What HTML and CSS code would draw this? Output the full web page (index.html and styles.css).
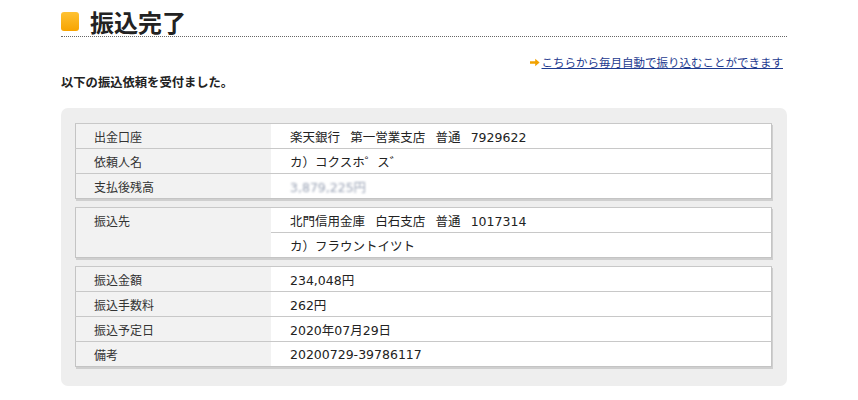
FILE: index.html
```html
<!DOCTYPE html>
<html lang="ja">
<head>
  <meta charset="UTF-8">
  <title>振込完了</title>
  <link rel="stylesheet" href="styles.css">
</head>
<body>
  <div class="page">
    <h1 class="title"><span class="title-mark"></span>振込完了</h1>
    <div class="link-row">
      <svg class="arrow" width="10" height="9" viewBox="0 0 10 9"><path d="M0 3.3h5.2V0.8L9.6 4.5 5.2 8.2V5.7H0z" fill="#f2a200"/></svg><a href="#" class="link">こちらから毎月自動で振り込むことができます</a>
    </div>
    <p class="intro">以下の振込依頼を受付ました。</p>

    <div class="panel">
      <table class="info">
        <tr><th>出金口座</th><td>楽天銀行&ensp;&nbsp;第一営業支店&ensp;&nbsp;普通&ensp;&nbsp;7929622</td></tr>
        <tr><th>依頼人名</th><td>カ）コクスホ゜ス゛</td></tr>
        <tr><th>支払後残高</th><td><span class="masked">3,879,225円</span></td></tr>
      </table>
      <table class="info">
        <tr><th rowspan="2" class="top">振込先</th><td>北門信用金庫&ensp;&nbsp;白石支店&ensp;&nbsp;普通&ensp;&nbsp;1017314</td></tr>
        <tr><td>カ）フラウントイツト</td></tr>
      </table>
      <table class="info">
        <tr><th>振込金額</th><td>234,048円</td></tr>
        <tr><th>振込手数料</th><td>262円</td></tr>
        <tr><th>振込予定日</th><td>2020年07月29日</td></tr>
        <tr><th>備考</th><td>20200729-39786117</td></tr>
      </table>
    </div>
  </div>
</body>
</html>
```

FILE: styles.css
```css
body {
  margin: 0;
  background: #fff;
  color: #222;
  font-family: "DejaVu Sans", "Noto Sans CJK JP", sans-serif;
  font-size: 12px;
}
.page {
  width: 726px;
  margin-left: 61px;
}
.title {
  display: flex;
  align-items: center;
  margin: 0;
  padding-top: 6px;
  height: 30px;
  border-bottom: 1px dotted #666;
  font-family: "Noto Sans CJK JP", sans-serif;
  font-size: 24px;
  font-weight: bold;
  color: #222;
}
.title-mark {
  width: 18px;
  height: 19px;
  margin-right: 11px;
  border-radius: 3px;
  background: linear-gradient(180deg, #ffc233 0%, #f7a400 100%);
}
.link-row {
  display: flex;
  justify-content: flex-end;
  align-items: center;
  margin-top: 17px;
  line-height: 16px;
  padding-right: 4px;
  font-family: "Noto Sans CJK JP", sans-serif;
  font-size: 11.5px;
}
.arrow {
  margin-right: 2px;
  margin-top: 1px;
}
.link {
  color: #1d3a8f;
  text-decoration: underline;
}
.intro {
  margin: 4px 0 0 0;
  line-height: 16px;
  font-family: "Noto Sans CJK JP", sans-serif;
  font-weight: bold;
  font-size: 12.3px;
  color: #222;
}
.panel {
  margin-top: 18px;
  background: #eeeeee;
  border-radius: 7px;
  padding: 15px 15px 19px 14px;
}
.info {
  width: 100%;
  border-collapse: collapse;
  background: #fff;
  border: 1px solid #c4c4c4;
  box-shadow: 1px 2px 0 #cfcfcf;
  margin-bottom: 8px;
}
.info:last-child {
  margin-bottom: 0;
}
.info th,
.info td {
  height: 24px;
  padding: 0;
  border-top: 1px solid #c8c8c8;
  text-align: left;
  font-weight: normal;
  vertical-align: middle;
}
.info th {
  width: 177px;
  padding-left: 18px;
  background: #f2f2f2;
  color: #333;
  font-family: "Noto Sans CJK JP", sans-serif;
  font-size: 12px;
}
.info th.top {
  vertical-align: top;
  padding-top: 4px;
}
.info td {
  padding-left: 19px;
  color: #222;
  font-size: 12.5px;
}
.masked {
  color: #9aa3b5;
  filter: blur(0.8px);
}
```
